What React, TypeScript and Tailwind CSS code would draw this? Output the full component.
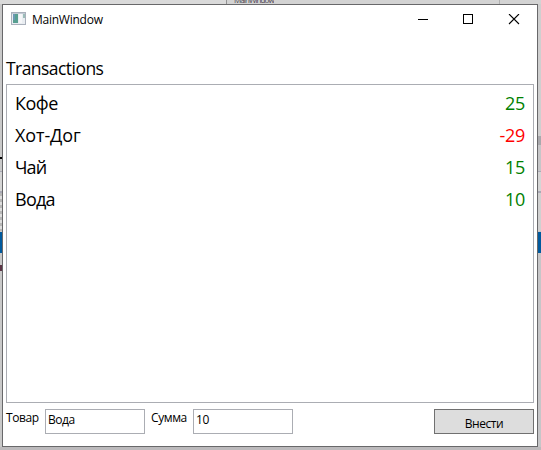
import React from "react";

type Transaction = { name: string; amount: number; nameClass: string };

const transactions: Transaction[] = [
  { name: "Кофе", amount: 25, nameClass: "tracking-[-0.5px]" },
  { name: "Хот-Дог", amount: -29, nameClass: "tracking-[-0.1px]" },
  { name: "Чай", amount: 15, nameClass: "tracking-[-0.9px]" },
  { name: "Вода", amount: 10, nameClass: "tracking-[-0.75px]" },
];

function AppIcon() {
  return (
    <svg width="16" height="14" viewBox="0 0 16 14" shapeRendering="crispEdges">
      <rect x="0.5" y="0.5" width="14" height="12" fill="#e9edf1" stroke="#a9b0bb" />
      <rect x="1" y="1" width="13" height="1" fill="#c4cbd5" />
      <rect x="2" y="2" width="5" height="9" fill="#589f91" />
      <rect x="2" y="2" width="2" height="6" fill="#6d98b4" />
      <rect x="8" y="2" width="3" height="9" fill="#f5f6f8" />
      <rect x="12" y="2" width="2" height="4" fill="#9bbcb8" />
    </svg>
  );
}

function TitleBar() {
  return (
    <div className="flex h-[30px] items-start">
      <div className="pt-[7px] pl-2">
        <AppIcon />
      </div>
      <span className="pt-[7px] pl-[5px] text-[12px] leading-4 tracking-[-0.25px]">MainWindow</span>
      <svg className="mt-[9px] mr-[17px] ml-auto" width="102" height="11" viewBox="0 0 102 11" fill="none" stroke="#000">
        <path d="M0 5.5h10M45.5 .5h9v9h-9z" shapeRendering="crispEdges" />
        <path d="M91 0l10 10M101 0L91 10" strokeWidth="1.1" />
      </svg>
    </div>
  );
}

/* The strips of the windows behind that stay visible around this one. */
function Desktop({ side }: { side: "left" | "right" }) {
  const left = side === "left";
  return (
    <div className={`flex shrink-0 flex-col ${left ? "w-[2px] bg-[#c9c9c9]" : "w-[3px] bg-[#c6c6c8]"}`}>
      <div className={left ? "h-[132px]" : "h-[132px] bg-[#cfcfcf]"} />
      <div className={left ? "h-[9px]" : "h-[9px] bg-[#a8a8ac]"} />
      <div className="h-[9px]" />
      <div className="h-[17px] pt-[3px]">
        {left && <div className="h-[2px] bg-black" />}
      </div>
      <div className="h-px bg-[#a9a9b5]" />
      <div className="h-[19px] bg-[#d5d5d5]" />
      <div className="h-[2px] bg-[#a9a9b5]" />
      <div className={left ? "h-[38px] bg-[repeating-linear-gradient(#b8b8b8_0_3px,#dedede_3px_6px)]" : "h-[38px] bg-[#d0d0d0]"} />
      <div className="mt-px h-[21px] bg-[#005a9e]" />
      <div className="h-[12px]" />
      <div className={left ? "h-[6px] bg-[#5b3445]" : "h-[6px]"} />
    </div>
  );
}

export default function App() {
  return (
    <div className="flex h-[450px] w-[541px] flex-col overflow-hidden bg-[#bcbabc] font-['Open_Sans','Noto_Sans',sans-serif] text-black">
      <div className="flex h-1 shrink-0 bg-[#d3d3d3]">
        <div className="w-[227px] border-r border-[#929292] bg-[#dadada]" />
        <div className="h-[3px] overflow-hidden pl-[7px]">
          <div className="mt-[-6px] text-[8px] leading-[11px] tracking-[-0.9px] text-[#4b4650]">MainWindow</div>
        </div>
        <div className="ml-auto h-1 w-[42px] border-l border-[#b0b0b0]" />
      </div>
      <div className="flex h-[443px] shrink-0">
        <Desktop side="left" />
        <div className="flex w-[536px] shrink-0 flex-col border border-[#68686a] bg-white">
          <TitleBar />
          <div className="flex flex-1 flex-col px-[3px]">
            <h1 className="mt-5 h-[29px] text-[17.5px] leading-[26px] tracking-[-0.55px]">Transactions</h1>
            <ul className="h-[319px] w-[528px] border border-[#abadb3] pt-[2px]">
              {transactions.map((t) => (
                <li key={t.name} className="flex h-8 items-center justify-between px-2 text-[18px] leading-6">
                  <span className={t.nameClass}>{t.name}</span>
                  <span className={`tracking-[-0.3px] ${t.amount < 0 ? "text-[#ff0000]" : "text-[#008000]"}`}>{t.amount}</span>
                </li>
              ))}
            </ul>
            <form className="mt-[6px] flex w-[528px] items-start text-[12px] leading-4" onSubmit={(e) => e.preventDefault()}>
              <label htmlFor="item" className="w-[39px] pt-[1px] tracking-[-0.4px] whitespace-nowrap">Товар</label>
              <input id="item" defaultValue="Вода" className="h-[25px] w-[100px] border border-[#abadb3] px-[2px] pb-[5px] tracking-[-0.45px] outline-none" />
              <label htmlFor="sum" className="w-12 pt-[1px] pl-[6px] tracking-[-0.4px] whitespace-nowrap">Сумма</label>
              <input id="sum" defaultValue="10" className="h-[25px] w-[100px] border border-[#abadb3] px-[2px] pb-[5px] tracking-[-0.25px] outline-none" />
              <button className="ml-auto h-[25px] w-[100px] border border-[#707070] bg-[#dddddd] pt-[4px] tracking-[-0.45px]">Внести</button>
            </form>
          </div>
        </div>
        <Desktop side="right" />
      </div>
    </div>
  );
}
